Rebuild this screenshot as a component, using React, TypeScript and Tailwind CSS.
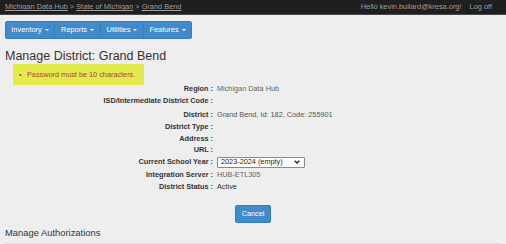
import React from "react";

const Caret = () => (
  <span className="inline-block ml-[3px] align-middle w-0 h-0 border-l-[2.5px] border-r-[2.5px] border-t-[2.5px] border-l-transparent border-r-transparent border-t-white" />
);

const rows: { label: string; value?: React.ReactNode; h: string; vcls?: string }[] = [
  { label: "Region :", value: "Michigan Data Hub", h: "h-[9px]", vcls: "text-[#666]" },
  { label: "ISD/Intermediate District Code :", h: "h-[16px]" },
  { label: "District :", value: "Grand Bend, Id: 182, Code: 255901", h: "h-[12px]", vcls: "text-[#555]" },
  { label: "District Type :", h: "h-[12px]" },
  { label: "Address :", h: "h-[11px]" },
  { label: "URL :", h: "h-[12px]" },
];

export default function App() {
  return (
    <div
      className="w-[506px] h-[244px] overflow-hidden bg-[#eeeeee] text-[#333]"
      style={{ fontFamily: '"Liberation Sans", Arial, sans-serif' }}
    >
      {/* top bar */}
      <div className="h-[15px] bg-[#1f1f1f] border-b border-[#4a4a4a] flex items-center justify-between pl-[5px] pr-[14px] text-[7.4px] text-[#9d9d9d] leading-none">
        <div className="flex items-center gap-[2px]">
          <span className="underline">Michigan Data Hub</span>
          <span>&gt;</span>
          <span className="underline">State of Michigan</span>
          <span>&gt;</span>
          <span className="underline">Grand Bend</span>
        </div>
        <div className="flex items-center gap-[8px]">
          <span>Hello kevin.bullard@kresa.org!</span>
          <span>Log off</span>
        </div>
      </div>

      {/* nav buttons */}
      <div className="mt-[6px] ml-[5px] flex h-[18px] w-[187px] rounded-[2px] border border-[#357ebd] bg-[#428bca] text-white text-[7.4px] leading-none overflow-hidden">
        <div className="w-[49px] flex items-center justify-center border-r border-[#357ebd]">
          Inventory<Caret />
        </div>
        <div className="w-[46px] flex items-center justify-center border-r border-[#357ebd]">
          Reports<Caret />
        </div>
        <div className="w-[43px] flex items-center justify-center border-r border-[#357ebd]">
          Utilities<Caret />
        </div>
        <div className="flex-1 flex items-center justify-center">
          Features<Caret />
        </div>
      </div>

      {/* heading */}
      <h1 className="mt-[10px] ml-[5px] text-[12.5px] leading-[15px] text-[#333]">
        Manage District: Grand Bend
      </h1>

      {/* validation */}
      <div className="ml-[13px] w-[131px] h-[21px] bg-[#e2ea4e] flex items-center text-[7.3px] text-[#b0452f] leading-none">
        <span className="ml-[6px] w-[8px]">•</span>
        <span>Password must be 10 characters.</span>
      </div>

      {/* details */}
      <div className="text-[7.3px] leading-none mt-[-1px]">
        {rows.map((r) => (
          <div key={r.label} className={`flex items-center ${r.h}`}>
            <div className="w-[213px] text-right font-bold text-[#333]">{r.label}</div>
            <div className={`pl-[4px] ${r.vcls ?? ""}`}>{r.value}</div>
          </div>
        ))}
        <div className="flex items-center h-[12px]">
          <div className="w-[213px] text-right font-bold text-[#333]">Current School Year :</div>
          <div className="pl-[4px]">
            <div className="w-[88px] h-[11px] bg-white border border-[#8a8a8a] rounded-[1px] flex items-center justify-between pl-[3px] pr-[4px] text-[#222]">
              <span>2023-2024 (empty)</span>
              <svg width="6" height="4" viewBox="0 0 6 4">
                <path d="M0.7 0.7 L3 3 L5.3 0.7" stroke="#222" strokeWidth="1.3" fill="none" />
              </svg>
            </div>
          </div>
        </div>
        <div className="flex items-center h-[13px]">
          <div className="w-[213px] text-right font-bold text-[#333]">Integration Server :</div>
          <div className="pl-[4px] text-[#666]">HUB-ETL305</div>
        </div>
        <div className="flex items-center h-[12px]">
          <div className="w-[213px] text-right font-bold text-[#333]">District Status :</div>
          <div className="pl-[4px] text-[#333]">Active</div>
        </div>
      </div>

      {/* cancel */}
      <div className="mt-[12px] flex justify-center">
        <div className="w-[36px] h-[18px] rounded-[2px] bg-[#428bca] border border-[#357ebd] text-white text-[7.3px] flex items-center justify-center leading-none">
          Cancel
        </div>
      </div>

      {/* manage authorizations */}
      <div className="mt-[3px] mx-[5px] h-[18px] border-b border-[#dddddd] text-[9.4px] leading-[14px] text-[#333]">
        Manage Authorizations
      </div>
    </div>
  );
}
